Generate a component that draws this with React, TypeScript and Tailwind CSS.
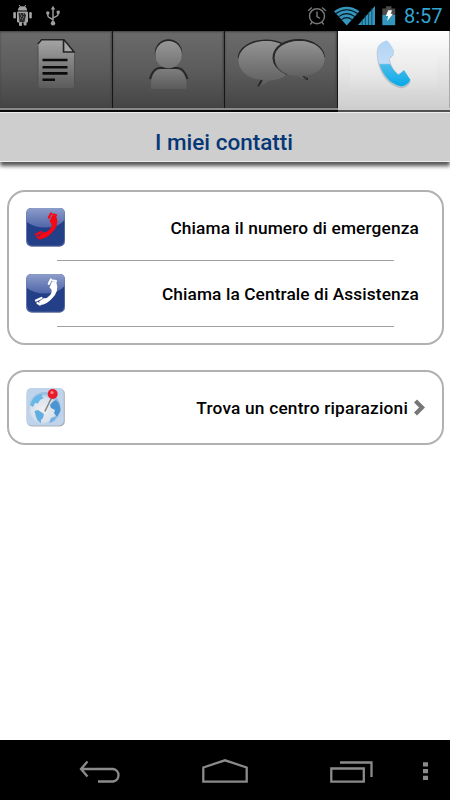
import React from "react";

function StatusBar() {
  return (
    <header className="flex h-[31px] items-stretch justify-between bg-black">
      <svg width="70" height="31" viewBox="0 0 70 31">
        <g fill="#a3a3a3">
          <path d="M18 10.5 Q18 6.3 22.5 6.3 Q27 6.3 27 10.5Z" />
          <rect x="17" y="11.5" width="11" height="11" rx="1" />
          <rect x="13.3" y="12" width="2.6" height="6.5" rx="1.2" />
          <rect x="29.2" y="12" width="2.6" height="6.5" rx="1.2" />
          <rect x="19" y="22" width="3" height="4" rx="1" />
          <rect x="23.6" y="21" width="3" height="4.5" rx="1" />
        </g>
        <path d="M19.4 5l1 2M25.6 5l-1 2" stroke="#a3a3a3" />
        <path d="M18.500 13h6l1.5 2-1.5 7h-5z" fill="#2b2b2b" />
        <path d="M20 14h1m2 0h1m-3 2h1m1 1h1m-4 1h1m1 1h1" stroke="#999" />
        <g fill="none" stroke="#a0a0a0" strokeWidth="1.4">
          <path d="M53 8v15M47.8 13v2.5q0 1.5 2 2.3l3.2 1.8M58.2 12v2q0 1.5-2 2.3L53 18" />
        </g>
        <g fill="#a0a0a0">
          <path d="M50.8 9.5L53 5.8l2.2 3.7z" />
          <circle cx="47.8" cy="13" r="1.7" />
          <rect x="56.7" y="10.7" width="3" height="3" />
          <circle cx="53" cy="23.3" r="2.2" />
        </g>
      </svg>
      <div className="flex">
        <svg width="98" height="31" viewBox="304 0 98 31">
          <g fill="none" stroke="#767676" strokeWidth="1.5">
            <circle cx="317" cy="16.2" r="7.5" />
            <path d="M317 11.5v5l3 2M308.2 10.8l3.7-3.3M325.8 10.8l-3.7-3.3M312.3 22l-2 2.5M321.7 22l2 2.5" />
          </g>
          <path d="M334 11.2Q346.7 2.5 359.400 11.200L346.700 25.500Z" fill="#3496bd" />
          <path d="M335.800 13.500Q346.700 6 357.600 13.500M338.600 16.600Q346.700 10.600 354.800 16.600M341.400 19.600Q346.700 15.600 352 19.600" fill="none" stroke="#04151c" strokeWidth="1.1" />
          <path d="M358 25L375 6v19z" fill="#3496bd" />
          <path d="M362.200 19v6M365.400 15v10M368.600 12v13M371.800 8v17" stroke="#0e4158" strokeWidth=".8" />
          <path d="M382.300 8.500h3.700V6.300h5.500v2.200h3.700V15h-12.900z" fill="#4b4b4b" />
          <path d="M382.300 15h12.900v10.200h-12.900z" fill="#3496bd" />
          <path d="M388.200 10.300h3.800l-1.200 3.500 2 .2-5.500 7 .8-5h-2.300z" fill="#fff" />
        </svg>
        <span className="mr-[8px] w-[40px] whitespace-nowrap pl-[2px] pt-[1px] text-[20px] leading-[31px] text-[#33a5d1]">8:57</span>
      </div>
    </header>
  );
}

const darkTab =
  "h-[77px] border-r border-[#161616] bg-linear-to-b from-[#6b6b6b] via-[#5c5c5c] to-[#454545] shadow-[inset_0_1px_2px_#444,inset_-1px_0_2px_#444]";

function Tabs() {
  return (
    <nav className="grid h-[77px] grid-cols-[113px_112px_113px_112px]">
      <button className={darkTab}>
        <svg width="112" height="77" viewBox="0 31 112 77">
          <defs>
            <linearGradient id="paper" x1="0" y1="0" x2="0" y2="1">
              <stop stopColor="#a4a4a4" />
              <stop offset="1" stopColor="#5b5b5b" />
            </linearGradient>
          </defs>
          <path d="M38.500 43Q38.500 40 41.500 40H64L74 51.500V86Q74 88 72 88H40.500Q38.500 88 38.500 86Z" fill="url(#paper)" />
          <path d="M37.800 44L41.500 39.800H64L74 52H63.500V40" fill="none" stroke="#242424" strokeWidth="1.600" />
          <path d="M65 42.500L72 51h-7z" fill="#a6a6a6" />
          <path d="M42.500 60h25M42.500 67.200h25M42.500 73.400h25M42.500 79.700h12.500" stroke="#0b0b0b" strokeWidth="2.600" />
          <path d="M37.800 47v36M74.500 55v28" stroke="#4d4d4d" strokeWidth=".7" />
        </svg>
      </button>
      <button className={darkTab}>
        <svg width="111" height="77" viewBox="113 31 111 77">
          <defs>
            <linearGradient id="head" x1="0" y1="0" x2="0" y2="1">
              <stop stopColor="#969696" />
              <stop offset="1" stopColor="#737373" />
            </linearGradient>
            <linearGradient id="body" x1="0" y1="0" x2="0" y2="1">
              <stop stopColor="#7e7e7e" />
              <stop offset="1" stopColor="#5b5b5b" />
            </linearGradient>
          </defs>
          <path d="M150 79Q153 68.500 159 68H178Q184 68.500 187.500 79" fill="none" stroke="#272727" strokeWidth="2" />
          <path d="M151 89V82Q153 69.500 161 69H176Q184 69.500 186.500 82V89Z" fill="url(#body)" />
          <circle cx="168.500" cy="53" r="13.700" fill="#242424" />
          <ellipse cx="168.600" cy="54.700" rx="13.300" ry="13.600" fill="url(#head)" />
        </svg>
      </button>
      <button className={darkTab}>
        <svg width="112" height="77" viewBox="225 31 112 77">
          <defs>
            <linearGradient id="bubble" x1="0" y1="0" x2="0" y2="1">
              <stop stopColor="#949494" />
              <stop offset="1" stopColor="#5c5c5c" />
            </linearGradient>
          </defs>
          <path d="M262 79Q260 84 258 86.500" stroke="#252525" strokeWidth="2" fill="none" />
          <path d="M238.500 58C239 48 251 40.300 266 40.300C273 40.300 279 42 283 44" fill="none" stroke="#272727" strokeWidth="1.800" />
          <path d="M266 41C281 41 294 49 294 60.500C294 73 281 80.500 269 80.500Q264 85 258 87Q263 83 263 80C248 79 238.500 71 238.500 60C238.500 49 251 41 266 41Z" fill="url(#bubble)" />
          <path d="M287 74C279 70 273.500 65 273.500 58C273.500 47 285 40 299 40C312 40 323 47 324 57" fill="none" stroke="#272727" strokeWidth="2" />
          <path d="M303 76Q305 79 308 79" fill="none" stroke="#262626" strokeWidth="2" />
          <path d="M299.500 41C314 41 324.500 49 324.500 59C324.500 69 314 76 302 76Q304 78 307 79Q302 79 297 76C285 76 275 69 275 59C275 48 286 41 299.500 41Z" fill="url(#bubble)" />
        </svg>
      </button>
      <button className="h-[77px] border-r border-[#aaa] bg-linear-to-b from-white via-[#e7e7e7] to-[#cecece]">
        <svg width="111" height="77" viewBox="338 31 111 77">
          <defs>
            <linearGradient id="tint" x1="0" y1="0" x2="0" y2="1">
              <stop stopColor="#b1d4f5" />
              <stop offset=".5" stopColor="#c3dcf7" />
              <stop offset=".53" stopColor="#4dbce9" />
              <stop offset="1" stopColor="#06a9e9" />
            </linearGradient>
            <linearGradient id="panel" x1="0" y1="0" x2="0" y2="1">
              <stop stopColor="#fff" stopOpacity="0" />
              <stop offset="1" stopColor="#dcdcdc" />
            </linearGradient>
          </defs>
          <path d="M350 52h87v37h-87z" fill="url(#panel)" />
          <path d="M385 41Q377 43 377 51C377 68 386 84 400 87Q407 88 411 81L404 71L398 73Q392 68 390 58L394 54V49Q389 45 387 40Z" fill="#8aa0ae" opacity=".5" transform="translate(-.3 1)" />
          <path d="M385 41Q378 43 377.500 51C377.500 68 387 83 400 86Q406 87 410.500 80L404 70L398.500 75Q393 70 390.500 65Q388.500 61 390 57L394 54Q393.500 46 387 40.500Z" fill="url(#tint)" />
        </svg>
      </button>
    </nav>
  );
}

function PhoneTile({ id, color }: { id: string; color: string }) {
  return (
    <svg className="shrink-0" width="40" height="40" viewBox="0 0 40 40">
      <defs>
        <linearGradient id={id} x1="0" y1="0" x2="0" y2="1">
          <stop stopColor="#8d9dca" />
          <stop offset="1" stopColor="#5065a8" />
        </linearGradient>
      </defs>
      <rect x=".3" y="1" width="38.500" height="38.500" rx="5" fill="#233f88" />
      <path d="M.3 14.500V6Q.3 1 5.300 1H33.800Q38.800 1 38.800 6V12.500Q33 20.500 20 20.500Q7 20.500 .3 14.500Z" fill={`url(#${id})`} />
      <path d="M.7 33.500Q1.500 39 7 39.200H33Q38.300 39 38.600 33.500" fill="none" stroke="#7a83aa" strokeWidth=".8" />
      <path d="M26 8.500L30.300 9Q33.500 18.500 26 25.500Q20 32 14.500 32L13 28.500L18 25Q21 26 24.500 21.500Q26.500 18.500 25 16L23.500 14.500Z" fill={color} />
      <path d="M27 7.500L30 8M25 6.500L22.800 10.800M10 27.500L15.500 25M11.500 30L14 31.500" stroke={color} strokeWidth="2.200" strokeLinecap="round" />
    </svg>
  );
}

function GlobeTile() {
  return (
    <svg className="shrink-0" width="40" height="40" viewBox="0 0 40 40">
      <defs>
        <radialGradient id="globe" cx=".45" cy=".55" r=".58">
          <stop stopColor="#f0f0f1" />
          <stop offset=".65" stopColor="#d8e1ec" />
          <stop offset="1" stopColor="#7fb0d8" />
        </radialGradient>
      </defs>
      <rect x=".8" y="1.500" width="38" height="38" rx="5" fill="#a8adb7" />
      <rect x=".3" y="1" width="37.500" height="37.500" rx="5" fill="#bfd3eb" />
      <circle cx="18.500" cy="21.300" r="16" fill="url(#globe)" />
      <path d="M4 18Q6 10 13 7.500L17 7L15.500 9.500L18 11L14 13L12 16.500L9 16L7 20Z" fill="#68b7e6" />
      <path d="M8.500 24L12 23L18 27L17 31L15 33L15 36Q10 33 9.500 28Z" fill="#62aee1" />
      <path d="M26.500 15L30 13Q35 18 34.300 24L31 30L28 26L29 23L25 21L24 18Z" fill="#4b94d2" />
      <path d="M25 31L31 29L28 34L23 36Z" fill="#78afe1" />
      <path d="M25.500 11L18.800 24.500" stroke="#85837b" strokeWidth="1.500" />
      <circle cx="26.700" cy="7" r="5" fill="#e91c2b" />
      <circle cx="26" cy="5.600" r="1.600" fill="#ff8585" />
    </svg>
  );
}

function SystemNav() {
  return (
    <footer className="h-[60px] bg-black">
      <svg width="450" height="60" viewBox="0 740 450 60" fill="none" stroke="#8b8b8b" strokeWidth="2.300">
        <path d="M82 769h31a6.300 6.300 0 0 1 0 12.500H98M87.500 761.500L81 769L87.500 776.500" />
        <path d="M203.300 781.700V767.500L225 760.300L246.700 767.500V781.700Z" />
        <path d="M331.300 768.500h32.500v13.200h-32.500zM340 762.500h31.500V777" />
        <path d="M423 762.200h5v4.300h-5zM423 769h5v4.300h-5zM423 775.800h5v4.300h-5z" fill="#8b8b8b" stroke="none" />
      </svg>
    </footer>
  );
}

const rowText = "whitespace-nowrap text-[17.3px] font-medium leading-[24px] text-black";

export default function App() {
  return (
    <div className="flex h-[800px] w-[450px] flex-col overflow-hidden bg-white font-['Roboto',sans-serif]">
      <StatusBar />
      <Tabs />
      <div className="h-[2px] border-r-[112px] border-[#cecece] bg-[#898989]" />
      <div className="h-[2px] border-r-[112px] border-[#505050] bg-[#0c0c0c]" />
      <h1 className="h-[50px] border-y border-[#ececec] bg-[#cecece] pr-[2px] pt-[4px] text-center text-[22.500px] font-medium leading-[50px] text-[#073775] shadow-[0_4px_4px_0px_#555]">
        I miei contatti
      </h1>
      <main className="flex flex-1 flex-col gap-[25px] pl-[7px] pr-[6px] pt-[28px]">
        <section className="h-[155px] rounded-[18px] border-2 border-[#b1b1b1] pl-[17px] pr-[23px]">
          <div className="flex h-[68px] items-start justify-between pt-[15px]">
            <PhoneTile id="redShine" color="#f60712" />
            <span className={`${rowText} mt-[9px] tracking-[0.14px]`}>Chiama il numero di emergenza</span>
          </div>
          <hr className="ml-[31px] w-[337px] border-[#a0a0a0]" />
          <div className="flex h-[65px] items-start justify-between pt-[12px]">
            <PhoneTile id="whiteShine" color="#fff" />
            <span className={`${rowText} mt-[9px] tracking-[0.1px]`}>Chiama la Centrale di Assistenza</span>
          </div>
          <hr className="ml-[31px] w-[337px] border-[#a0a0a0]" />
        </section>
        <section className="flex h-[75px] items-start justify-between rounded-[18px] border-2 border-[#b1b1b1] pl-[17px] pr-[15px] pt-[15px]">
          <GlobeTile />
          <div className="mt-[9px] flex items-center gap-[5px]">
            <span className={`${rowText} tracking-[0.2px]`}>Trova un centro riparazioni</span>
            <svg width="14" height="18" viewBox="0 0 14 18" fill="none" stroke="#777" strokeWidth="4.200">
              <path d="M2.500 2L9 8.500L2.500 15" />
            </svg>
          </div>
        </section>
      </main>
      <SystemNav />
    </div>
  );
}
